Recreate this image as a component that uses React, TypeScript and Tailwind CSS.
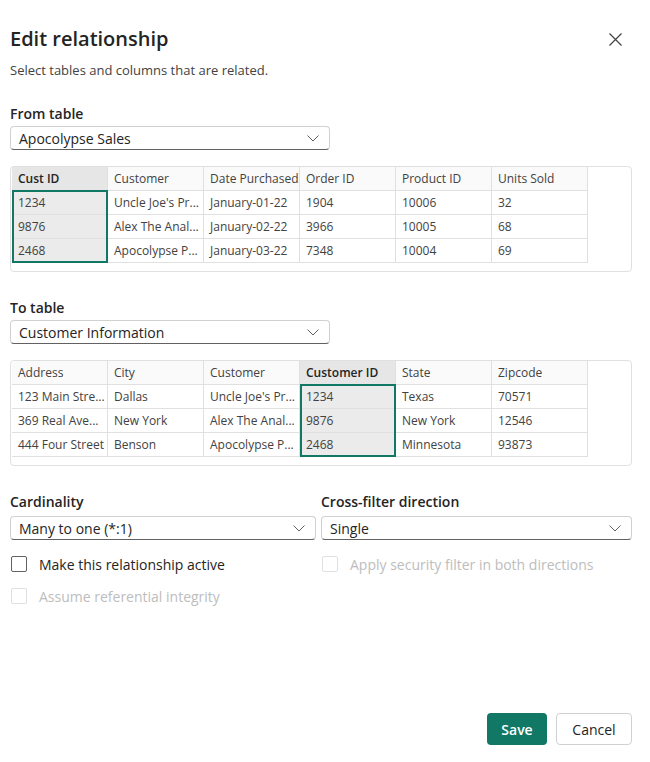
import React from "react";

type Col = { name: string; values: string[]; selected?: boolean };

const fromCols: Col[] = [
  { name: "Cust ID", values: ["1234", "9876", "2468"], selected: true },
  { name: "Customer", values: ["Uncle Joe's Pr...", "Alex The Anal...", "Apocolypse P..."] },
  { name: "Date Purchased", values: ["January-01-22", "January-02-22", "January-03-22"] },
  { name: "Order ID", values: ["1904", "3966", "7348"] },
  { name: "Product ID", values: ["10006", "10005", "10004"] },
  { name: "Units Sold", values: ["32", "68", "69"] },
];

const toCols: Col[] = [
  { name: "Address", values: ["123 Main Stre...", "369 Real Ave...", "444 Four Street"] },
  { name: "City", values: ["Dallas", "New York", "Benson"] },
  { name: "Customer", values: ["Uncle Joe's Pr...", "Alex The Anal...", "Apocolypse P..."] },
  { name: "Customer ID", values: ["1234", "9876", "2468"], selected: true },
  { name: "State", values: ["Texas", "New York", "Minnesota"] },
  { name: "Zipcode", values: ["70571", "12546", "93873"] },
];

function Chevron() {
  return (
    <svg width="12" height="7" viewBox="0 0 12 7" fill="none">
      <path d="M0.5 0.5L6 6L11.5 0.5" stroke="#616161" strokeWidth="1" />
    </svg>
  );
}

function Dropdown({ value, width }: { value: string; width: string }) {
  return (
    <div
      className={`${width} h-[24px] flex items-center justify-between pl-[8px] pr-[10px] border border-[#d1d1d1] border-b-[#616161] rounded-[4px] text-[14px] text-[#242424] bg-white`}
    >
      <span>{value}</span>
      <Chevron />
    </div>
  );
}

function PreviewTable({ cols }: { cols: Col[] }) {
  return (
    <div className="w-[622px] h-[106px] border border-[#e0e0e0] rounded-[4px] pl-[1px] bg-white">
      <div className="flex">
        {cols.map((c, i) => (
          <div key={i} className="w-[96px] flex flex-col">
            <div
              className={`h-[23px] flex items-center pl-[6px] border-r border-[#e0e0e0] text-[12px] ${
                c.selected ? "bg-[#e6e6e6] font-semibold text-[#242424]" : "bg-[#fafafa] text-[#424242]"
              }`}
            >
              {c.name}
            </div>
            <div
              className={
                c.selected
                  ? "bg-[#ebebeb] outline-2 outline-[#117865] -outline-offset-2"
                  : "bg-white"
              }
            >
              {c.values.map((v, j) => (
                <div
                  key={j}
                  className="h-[24px] flex items-center pl-[6px] border-t border-r border-[#e0e0e0] text-[12px] text-[#424242] whitespace-nowrap overflow-hidden"
                >
                  {v}
                </div>
              ))}
              <div className="border-t border-[#e0e0e0]" />
            </div>
          </div>
        ))}
      </div>
    </div>
  );
}

function Checkbox({ label, disabled }: { label: string; disabled?: boolean }) {
  return (
    <div className="flex items-center gap-[12px] h-[20px]">
      <div
        className={`w-[16px] h-[16px] rounded-[2px] border ${
          disabled ? "border-[#e0e0e0]" : "border-[#616161]"
        }`}
      />
      <span className={`text-[14px] ${disabled ? "text-[#bdbdbd]" : "text-[#242424]"}`}>{label}</span>
    </div>
  );
}

export default function App() {
  return (
    <div
      className="w-[650px] h-[762px] bg-white text-[#242424] flex flex-col pl-[10px] pr-[18px]"
      style={{ fontFamily: '"Open Sans", "Noto Sans", sans-serif' }}
    >
      {/* header */}
      <div className="flex items-center justify-between pt-[25px]">
        <h1 className="text-[20px] font-semibold leading-[28px]">Edit relationship</h1>
        <button className="mr-[10px] text-[#424242]">
          <svg width="13" height="13" viewBox="0 0 13 13">
            <path d="M0.5 0.5L12.5 12.5M12.5 0.5L0.5 12.5" stroke="#424242" strokeWidth="1.2" />
          </svg>
        </button>
      </div>
      <p className="mt-[8px] text-[13px] leading-[18px] text-[#424242]">Select tables and columns that are related.</p>

      {/* from */}
      <div className="mt-[25px] text-[14px] font-semibold leading-[20px]">From table</div>
      <div className="mt-[2px]">
        <Dropdown value="Apocolypse Sales" width="w-[320px]" />
      </div>
      <div className="mt-[16px]">
        <PreviewTable cols={fromCols} />
      </div>

      {/* to */}
      <div className="mt-[26px] text-[14px] font-semibold leading-[20px]">To table</div>
      <div className="mt-[2px]">
        <Dropdown value="Customer Information" width="w-[320px]" />
      </div>
      <div className="mt-[16px]">
        <PreviewTable cols={toCols} />
      </div>

      {/* options */}
      <div className="mt-[26px] flex gap-[5px]">
        <div className="w-[306px] flex flex-col">
          <div className="text-[14px] font-semibold leading-[20px]">Cardinality</div>
          <div className="mt-[4px]">
            <Dropdown value="Many to one (*:1)" width="w-[306px]" />
          </div>
        </div>
        <div className="w-[311px] flex flex-col">
          <div className="text-[14px] font-semibold leading-[20px]">Cross-filter direction</div>
          <div className="mt-[4px]">
            <Dropdown value="Single" width="w-[311px]" />
          </div>
        </div>
      </div>
      <div className="mt-[14px] flex pl-[1px]">
        <div className="w-[311px]">
          <Checkbox label="Make this relationship active" />
        </div>
        <Checkbox label="Apply security filter in both directions" disabled />
      </div>
      <div className="mt-[12px] pl-[1px]">
        <Checkbox label="Assume referential integrity" disabled />
      </div>

      {/* footer */}
      <div className="mt-auto mb-[17px] flex justify-end gap-[9px]">
        <button className="w-[60px] h-[32px] rounded-[4px] bg-[#117865] text-white text-[14px] font-semibold">
          Save
        </button>
        <button className="w-[76px] h-[32px] rounded-[4px] border border-[#d1d1d1] bg-white text-[#242424] text-[14px]">
          Cancel
        </button>
      </div>
    </div>
  );
}
